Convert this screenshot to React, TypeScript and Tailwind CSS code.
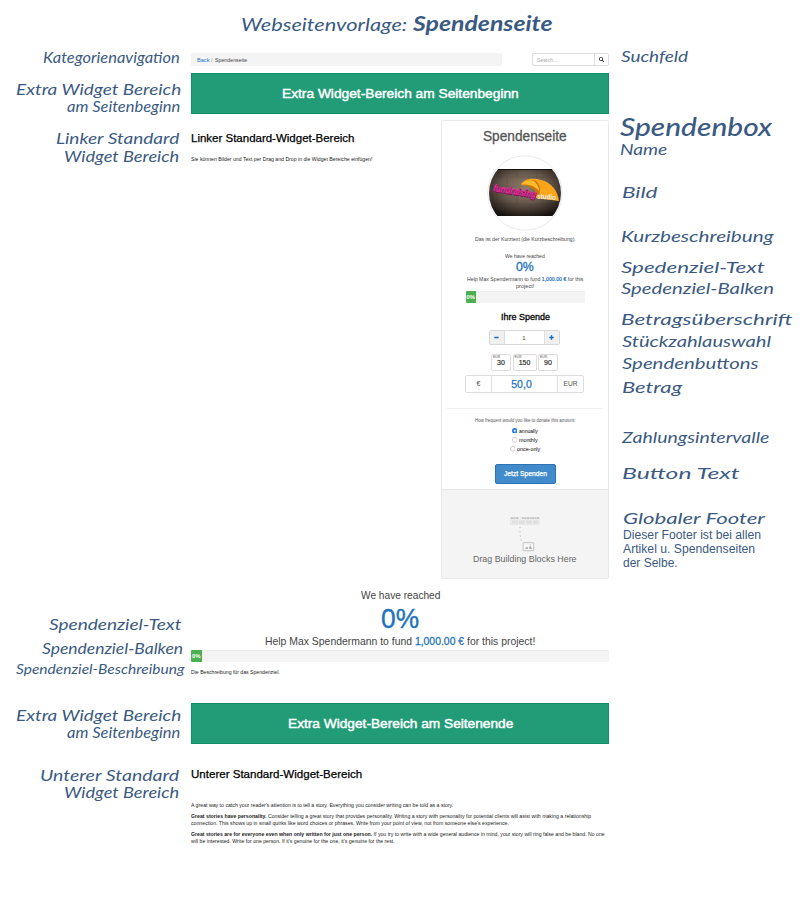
import { useLayoutEffect, useRef, type ReactNode } from "react";
import { FaMinus, FaPlus, FaSearch } from "react-icons/fa";

/** A single line of text, stretched to the width of its box. */
function Fit({ className, children }: { className: string; children: ReactNode }) {
  const outer = useRef<HTMLDivElement>(null);
  const inner = useRef<HTMLSpanElement>(null);
  useLayoutEffect(() => {
    if (!outer.current || !inner.current) return;
    const natural = inner.current.offsetWidth;
    inner.current.style.transform = `scaleX(${outer.current.clientWidth / natural})`;
  }, []);
  return (
    <div ref={outer} className={`shrink-0 whitespace-nowrap ${className}`}>
      <span ref={inner} className="inline-block origin-left">
        {children}
      </span>
    </div>
  );
}

function Note({ className, children }: { className: string; children: ReactNode }) {
  return (
    <Fit className={`h-[17px] font-['Lato',sans-serif] text-[15px] leading-[18px] italic ${className}`}>
      {children}
    </Fit>
  );
}

function Tiny({ className, children }: { className: string; children: ReactNode }) {
  return <Fit className={`h-2 text-[5.6px] leading-[8px] ${className}`}>{children}</Fit>;
}

function Banner({ className, children }: { className: string; children: ReactNode }) {
  return (
    <div
      className={`flex h-[41px] shrink-0 items-center justify-center border border-[#0f8f67] bg-[#229b77] text-[13.4px] leading-[16px] text-white [-webkit-text-stroke:0.45px_white] ${className}`}
    >
      {children}
    </div>
  );
}

function Progress({ className }: { className: string }) {
  return (
    <div className={`h-3 shrink-0 rounded-[1px] border-t border-[#ececec] bg-[#f4f4f4] ${className}`}>
      <div className="-mt-px flex h-3 w-[10.5px] items-center justify-center rounded-l-[1px] bg-[#4caf50] text-[5.8px] font-bold text-white">
        0%
      </div>
    </div>
  );
}

function Logo() {
  return (
    <svg viewBox="0 0 76 76" className="mt-[11px] size-[76px] shrink-0">
      <defs>
        <radialGradient id="wall" cx="50%" cy="40%" r="65%">
          <stop offset="0" stopColor="#93806c" />
          <stop offset="0.5" stopColor="#65574b" />
          <stop offset="1" stopColor="#16110e" />
        </radialGradient>
        <clipPath id="disc">
          <circle cx="38" cy="38" r="36" />
        </clipPath>
      </defs>
      <circle cx="38" cy="38" r="37.2" fill="#fff" stroke="#e9e9e9" strokeWidth="1" />
      <g clipPath="url(#disc)">
        <rect x="0" y="14" width="76" height="47" fill="url(#wall)" />
        <g stroke="#2a221c" strokeOpacity="0.2" strokeWidth="0.5">
          <path d="M0 22H76M0 31H76M0 40H76M0 49H76M12 14V22M30 14V22M50 14V22M20 22V31M42 22V31M10 31V40M30 40V49M55 40V49M18 49V61M43 49V61" />
        </g>
        <rect x="0" y="14" width="76" height="0.8" fill="#050505" />
        <path d="M34 30C37 23 46 23 54 25C64 27 71 36 72 46L49 43C51 35 45 30 34 30Z" fill="#f9a51a" />
        <path d="M34 30C37 25 44 24 49 26C54 30 54 37 51 43C50 35 45 31 34 30Z" fill="#c97808" />
        <path d="M34 29.5C38 24.5 45 24.5 48 27C51 30 52 33 52 36C48 31 43 29 34 29.5Z" fill="#ffb92d" />
        <text x="6.4" y="36.8" transform="rotate(9 6 36)" textLength="43" lengthAdjust="spacingAndGlyphs" fill="#7d1058" stroke="#7d1058" strokeWidth="0.8" className="font-['Liberation_Sans',sans-serif] text-[10px] font-bold italic">fundraising</text>
        <text x="6" y="36" transform="rotate(9 6 36)" textLength="43" lengthAdjust="spacingAndGlyphs" fill="#e0319b" stroke="#e0319b" strokeWidth="0.2" className="font-['Liberation_Sans',sans-serif] text-[10px] font-bold italic">fundraising</text>
        <text x="50" y="43.4" transform="rotate(5 50 43)" textLength="19" lengthAdjust="spacingAndGlyphs" fill="#f3efe9" className="font-['Liberation_Sans',sans-serif] text-[7.5px] font-bold">studio</text>
      </g>
    </svg>
  );
}

function Chip({ className, value }: { className: string; value: string }) {
  return (
    <div className={`flex h-[17px] flex-col rounded-[2px] border border-[#ddd] bg-white ${className}`}>
      <span className="h-[3px] pl-px text-[3.4px] leading-[4px] text-[#555]">EUR</span>
      <span className="text-center text-[7px] leading-[10px] text-[#222] [-webkit-text-stroke:0.15px_#222]">{value}</span>
    </div>
  );
}

function Radio({ checked, className, children }: { checked?: boolean; className: string; children: ReactNode }) {
  return (
    <div className="flex h-[9.2px] items-center gap-[2px]">
      <svg viewBox="0 0 6 6" className="size-[5.5px]">
        {checked ? (
          <>
            <circle cx="3" cy="3" r="3" fill="#1a7cf0" />
            <circle cx="3" cy="3" r="1.1" fill="#fff" />
          </>
        ) : (
          <circle cx="3" cy="3" r="2.6" fill="#fff" stroke="#a5a5a5" strokeWidth="0.6" />
        )}
      </svg>
      <Tiny className={`text-black ${className}`}>{children}</Tiny>
    </div>
  );
}

function DragArt() {
  return (
    <svg viewBox="0 0 32 38" className="mt-[25px] h-[38px] w-8 shrink-0">
      <rect x="1.5" y="2.5" width="29" height="7" fill="#ededed" stroke="#ddd" strokeWidth="0.5" />
      <path d="M2 3.2H10M13 3.2H30" stroke="#b5b5b5" strokeWidth="1.2" strokeDasharray="2 0.5" />
      <path d="M3 7H29" stroke="#dedede" strokeWidth="3" strokeDasharray="6 1" />
      <path d="M11 12V20L12.5 26" fill="none" stroke="#aaa" strokeWidth="0.8" strokeDasharray="1.2 3" />
      <rect x="14.1" y="27.7" width="10.6" height="8" rx="0.6" fill="#f9f9f9" stroke="#bbb" strokeWidth="0.9" />
      <path d="M16 34L18 31.5L19.5 34ZM20 32.3L21.5 30.7L23 34H20.5Z" fill="#aaa" />
      <circle cx="21.3" cy="29.8" r="0.6" fill="#aaa" />
    </svg>
  );
}

function DonationBox() {
  return (
    <aside className="flex h-[459px] w-[168px] flex-col items-center rounded-[2px] border border-[#e9e9e9] bg-white text-[#444]">
      <Fit className="mt-[7px] h-4 w-[84px] text-[14px] leading-[16px] text-[#555] [-webkit-text-stroke:0.3px_#555]">Spendenseite</Fit>
      <Logo />
      <Tiny className="mt-1 w-[101px]">Das ist der Kurztext (die Kurzbeschreibung).</Tiny>
      <Tiny className="mt-[9px] w-10">We have reached</Tiny>
      <Fit className="mt-px h-3 w-[18px] text-[12.3px] leading-[13px] text-[#1f74bd] [-webkit-text-stroke:0.3px_#1f74bd]">0%</Fit>
      <Fit className="mt-[3px] h-[7px] w-[116px] text-[5.6px] leading-[7px]">
        Help Max Spendermann to fund <span className="text-[#1f74bd] [-webkit-text-stroke:0.2px_#1f74bd]">1,000.00 €</span> for this
      </Fit>
      <Fit className="h-[7px] w-[18px] text-[5.6px] leading-[7px]">project!</Fit>
      <Progress className="mt-px w-[119px]" />
      <Fit className="mt-[9px] h-[10px] w-[49px] text-[8.8px] leading-[10px] text-black [-webkit-text-stroke:0.3px_black]">Ihre Spende</Fit>
      <div className="mt-2 mr-[2px] flex h-[15px] w-[71px] shrink-0 overflow-hidden rounded-[2px] border border-[#d8d8d8]">
        <span className="flex w-[15px] items-center justify-center border-r border-[#ddd] bg-[#f0f0f0]">
          <FaMinus className="size-[5px] text-[#1f74bd]" stroke="currentColor" strokeWidth="60" />
        </span>
        <span className="flex-1 text-center text-[6px] leading-[14px]">1</span>
        <span className="flex w-[15px] items-center justify-center border-l border-[#ddd] bg-[#f0f0f0]">
          <FaPlus className="size-[5px] text-[#1f74bd]" stroke="currentColor" strokeWidth="60" />
        </span>
      </div>
      <div className="mt-[9px] mr-px flex gap-[1.5px]">
        <Chip className="w-5" value="30" />
        <Chip className="w-6" value="150" />
        <Chip className="w-5" value="90" />
      </div>
      <div className="mt-1 mr-px flex h-[18px] w-[119px] shrink-0 items-stretch rounded-[2px] border border-[#ddd] text-center leading-[16px]">
        <span className="w-[26px] border-r border-[#ddd] text-[7px] text-[#555]">€</span>
        <span className="flex-1 pr-[6px] text-[10.5px] text-[#1f74bd] [-webkit-text-stroke:0.25px_#1f74bd]">50,0</span>
        <span className="w-[26px] border-l border-[#ddd] text-[6.7px] text-[#555]">EUR</span>
      </div>
      <div className="mt-[15px] h-px w-[156px] shrink-0 bg-[#efefef]" />
      <Fit className="mt-[7px] h-2 w-[100px] text-[5px] leading-[8px] text-[#555]">How frequent would you like to donate this amount:</Fit>
      <div className="mt-[2px] flex h-7 shrink-0 flex-col items-center">
        <Radio checked className="w-[19px]">annually</Radio>
        <Radio className="w-[19px]">monthly</Radio>
        <Radio className="w-[23px]">once-only</Radio>
      </div>
      <button className="mt-[10px] flex h-[20px] w-[61px] shrink-0 items-center justify-center rounded-[2px] border border-[#2d74b5] bg-[#428bca] text-white">
        <Fit className="h-2 w-[43px] text-[6.9px] leading-[8px] [-webkit-text-stroke:0.25px_white]">Jetzt Spenden</Fit>
      </button>
      <div className="mt-[5px] flex w-full flex-1 flex-col items-center border-t border-[#e6e6e6] bg-[#f4f4f4]">
        <DragArt />
        <Fit className="mt-px h-[10px] w-[104px] text-[9.3px] leading-[10px] text-[#666]">Drag Building Blocks Here</Fit>
      </div>
    </aside>
  );
}

export default function App() {
  return (
    <div className="h-[900px] w-[800px] overflow-hidden bg-white font-['Liberation_Sans',Arial,sans-serif] text-[#222]">
      <header className="flex h-10 gap-[6px] pt-[11px] pl-[241px] text-[#3a5a82]">
        <Fit className="h-6 w-[166px] font-['Lato',sans-serif] text-[18px] leading-[27px] italic">Webseitenvorlage:</Fit>
        <Fit className="h-6 w-[139px] font-['Lato',sans-serif] text-[20px] leading-[25px] font-bold italic">Spendenseite</Fit>
      </header>
      <div className="flex">
        <div className="flex w-[191px] shrink-0 flex-col items-end pr-[11px] text-[#3a5a82]">
          <Note className="mt-2 w-[137px]">Kategorienavigation</Note>
          <Note className="-mr-px mt-[15px] w-[165px]">Extra Widget Bereich</Note>
          <Note className="w-[113px]">am Seitenbeginn</Note>
          <Note className="mt-[15px] mr-px w-[123px]">Linker Standard</Note>
          <Note className="mt-px mr-px w-[115px]">Widget Bereich</Note>
          <Note className="mt-[451px] -mr-px w-[132px]">Spendenziel-Text</Note>
          <Note className="mt-[7px] -mr-[3px] w-[141px]">Spendenziel-Balken</Note>
          <Fit className="mt-1 -mr-1 h-[17px] w-[168px] font-['Lato',sans-serif] text-[13.5px] leading-[18px] italic">Spendenziel-Beschreibung</Fit>
          <Note className="-mr-px mt-[29px] w-[165px]">Extra Widget Bereich</Note>
          <Note className="w-[113px]">am Seitenbeginn</Note>
          <Note className="mt-[26px] mr-px w-[139px]">Unterer Standard</Note>
          <Note className="mr-px w-[115px]">Widget Bereich</Note>
        </div>

        <main className="flex w-[418px] shrink-0 flex-col">
          <div className="mt-[13px] flex h-[13px] shrink-0 justify-between">
            <nav className="flex w-[311px] items-center gap-[2px] rounded-[1px] bg-[#f4f4f4] pl-[6px]">
              <Tiny className="w-3 text-[#1f74bd]">Back</Tiny>
              <Tiny className="w-[2px] text-[#999]">/</Tiny>
              <Tiny className="w-8 text-[#444]">Spendenseite</Tiny>
            </nav>
            <div className="flex w-[77px] items-center rounded-[2px] border border-[#ddd]">
              <div className="flex-1 pl-1">
                <Tiny className="w-5 text-[#aaa]">Search...</Tiny>
              </div>
              <span className="flex h-full w-[14px] items-center justify-center border-l border-[#ddd]">
                <FaSearch className="size-[5px] text-[#222]" />
              </span>
            </div>
          </div>
          <Banner className="mt-[7px]">
            <Fit className="h-4 w-[237px]">Extra Widget-Bereich am Seitenbeginn</Fit>
          </Banner>
          <div className="mt-[6px] flex h-[459px] shrink-0 justify-between">
            <section>
              <Fit className="mt-3 h-3 w-[164px] text-[11px] leading-[12px] text-black [-webkit-text-stroke:0.25px_black]">Linker Standard-Widget-Bereich</Fit>
              <Tiny className="mt-[11px] w-[181px]">Sie können Bilder und Text per Drag and Drop in die Widget Bereiche einfügen!</Tiny>
            </section>
            <DonationBox />
          </div>
          <section className="flex flex-col items-center text-[#444]">
            <Fit className="mt-[10px] h-3 w-[79px] text-[10.8px] leading-[12px]">We have reached</Fit>
            <Fit className="mt-[5px] h-[26px] w-[38px] text-[27px] leading-[26px] text-[#1f74bd] [-webkit-text-stroke:0.4px_#1f74bd]">0%</Fit>
            <Fit className="mt-[3px] h-3 w-[270px] text-[10.8px] leading-[12px]">
              Help Max Spendermann to fund <span className="text-[#1f74bd] [-webkit-text-stroke:0.3px_#1f74bd]">1,000.00 €</span> for this project!
            </Fit>
            <Progress className="mt-[3px] w-full" />
          </section>
          <Tiny className="mt-[6px] w-[89px]">Die Beschreibung für das Spendenziel.</Tiny>
          <Banner className="mt-[27px]">
            <Fit className="h-4 w-[225px]">Extra Widget-Bereich am Seitenende</Fit>
          </Banner>
          <Fit className="mt-6 h-3 w-[171px] text-[11px] leading-[12px] text-black [-webkit-text-stroke:0.25px_black]">Unterer Standard-Widget-Bereich</Fit>
          <Tiny className="mt-[21px] w-[262px]">A great way to catch your reader's attention is to tell a story. Everything you consider writing can be told as a story.</Tiny>
          <Tiny className="mt-[3px] w-[400px]">
            <b>Great stories have personality.</b> Consider telling a great story that provides personality. Writing a story with personality for potential clients will asist with making a relationship
          </Tiny>
          <Tiny className="-mt-px w-[318px]">connection. This shows up in small quirks like word choices or phrases. Write from your point of view, not from someone else's experience.</Tiny>
          <Tiny className="mt-[3px] w-[414px]">
            <b>Great stories are for everyone even when only written for just one person.</b> If you try to write with a wide general audience in mind, your story will ring false and be bland. No one
          </Tiny>
          <Tiny className="-mt-px w-[204px]">will be interested. Write for one person. If it's genuine for the one, it's genuine for the rest.</Tiny>
        </main>

        <div className="flex flex-1 flex-col pl-3 text-[#3a5a82]">
          <Note className="mt-[7px] w-[67px]">Suchfeld</Note>
          <Fit className="mt-[51px] -ml-px h-6 w-[152px] font-['Lato',sans-serif] text-[24px] leading-[24px] font-medium italic">Spendenbox</Fit>
          <Note className="mt-px -ml-px w-[47px]">Name</Note>
          <Note className="mt-[26px] ml-px w-9">Bild</Note>
          <Note className="mt-[27px] w-[153px]">Kurzbeschreibung</Note>
          <Note className="mt-[14px] w-[143px]">Spedenziel-Text</Note>
          <Note className="mt-1 w-[153px]">Spedenziel-Balken</Note>
          <Note className="mt-[14px] w-[171px]">Betragsüberschrift</Note>
          <Note className="mt-[5px] ml-px w-[149px]">Stückzahlauswahl</Note>
          <Note className="mt-[5px] ml-px w-[137px]">Spendenbuttons</Note>
          <Note className="mt-[7px] ml-px w-[60px]">Betrag</Note>
          <Note className="mt-[33px] ml-px w-[148px]">Zahlungsintervalle</Note>
          <Note className="mt-[19px] ml-px w-[117px]">Button Text</Note>
          <Note className="mt-7 ml-[2px] w-[142px]">Globaler Footer</Note>
          <div className="mt-[2px] ml-[2px] text-[12px] leading-[14px]">
            <Fit className="w-[138px]">Dieser Footer ist bei allen</Fit>
            <Fit className="w-[132px]">Artikel u. Spendenseiten</Fit>
            <Fit className="w-[55px]">der Selbe.</Fit>
          </div>
        </div>
      </div>
    </div>
  );
}
